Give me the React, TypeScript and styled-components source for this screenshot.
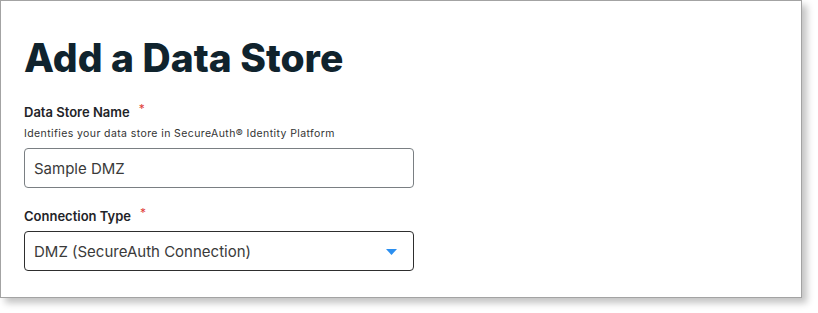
import React from 'react';
import styled, { createGlobalStyle } from 'styled-components';

const GlobalStyle = createGlobalStyle`
  html, body {
    margin: 0;
    padding: 0;
    background: #ffffff;
  }
  body {
    min-height: 313px;
    font-family: Inter, 'Noto Sans', sans-serif;
    color: #222;
  }
`;

const Page = styled.div`
  padding: 0 16px 15px 0;
`;

const Frame = styled.div`
  box-sizing: border-box;
  width: 802px;
  height: 298px;
  border: 1px solid #a3a3a3;
  background: #ffffff;
  box-shadow: 5px 5px 7px rgba(0, 0, 0, 0.24);
  padding: 35px 23px 0;
`;

const Title = styled.h1`
  margin: 0 0 24px;
  font-size: 39px;
  line-height: 44px;
  font-weight: 800;
  color: #10232d;
  letter-spacing: 0px;
`;

const Field = styled.div`
  width: 390px;
  margin-bottom: 20px;
`;

const Label = styled.label`
  display: flex;
  align-items: flex-start;
  gap: 9px;
  font-size: 13px;
  line-height: 16px;
  font-weight: 600;
  color: #1f2428;
`;

const Required = styled.span`
  color: #e0403a;
  font-size: 12px;
  font-weight: 400;
  line-height: 10px;
`;

const Hint = styled.div`
  margin-top: 8px;
  font-size: 10.5px;
  line-height: 12px;
  letter-spacing: 0.4px;
  color: #333;
`;

const Input = styled.div<{ $dark?: boolean }>`
  box-sizing: border-box;
  display: flex;
  align-items: center;
  justify-content: space-between;
  height: 40px;
  margin-top: ${(p) => (p.$dark ? '7px' : '8px')};
  padding: 0 16px 0 9px;
  border: 1px solid ${(p) => (p.$dark ? '#2e2e2e' : '#7a7f83')};
  border-radius: 4px;
  font-size: 15px;
  color: #3a3a3a;
`;

const Caret = styled.svg`
  width: 11px;
  height: 6px;
  margin-top: 2px;
`;

export default function App() {
  return (
    <Page>
      <GlobalStyle />
      <Frame>
        <Title>Add a Data Store</Title>
        <Field>
          <Label>
            Data Store Name <Required>*</Required>
          </Label>
          <Hint>Identifies your data store in SecureAuth® Identity Platform</Hint>
          <Input>Sample DMZ</Input>
        </Field>
        <Field>
          <Label>
            Connection Type <Required>*</Required>
          </Label>
          <Input $dark>
            <span>DMZ (SecureAuth Connection)</span>
            <Caret viewBox="0 0 11 6">
              <path d="M0 0 H11 L5.5 6 Z" fill="#2b8ff0" />
            </Caret>
          </Input>
        </Field>
      </Frame>
    </Page>
  );
}
